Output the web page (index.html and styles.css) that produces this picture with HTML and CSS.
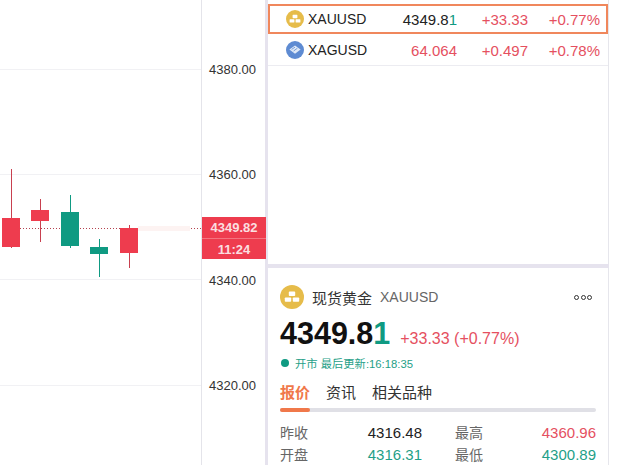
FILE: index.html
```html
<!DOCTYPE html>
<html lang="en">
<head>
    <meta charset="UTF-8" />
    <title>XAUUSD</title>
    <link rel="stylesheet" href="styles.css">
</head>
<body>
    <!-- Candle chart, cropped on the left -->
    <section class="chart">
        <svg class="candles" width="201" height="465" viewBox="0 0 201 465">
            <g stroke="#f1f1f4">
                <line x1="0" y1="69.5" x2="201" y2="69.5" />
                <line x1="0" y1="174.5" x2="201" y2="174.5" />
                <line x1="0" y1="279.5" x2="201" y2="279.5" />
                <line x1="0" y1="385.5" x2="201" y2="385.5" />
            </g>
            <line x1="20" y1="228.5" x2="201" y2="228.5" stroke="#b5424f" stroke-dasharray="1 2" />
            <g fill="#ee3c4e">
                <rect x="11" y="169" width="1" height="79" fill="#c8404f" />
                <rect x="2" y="218" width="18" height="29" />
                <rect x="40" y="199" width="1" height="43" fill="#c8404f" />
                <rect x="31" y="210" width="18" height="11" />
                <rect x="129" y="225" width="1" height="43" fill="#c8404f" />
                <rect x="120" y="228" width="18" height="25" />
            </g>
            <g fill="#0f9a82">
                <rect x="70" y="195" width="1" height="53" />
                <rect x="61" y="212" width="18" height="34" />
                <rect x="99" y="239" width="1" height="38" />
                <rect x="90" y="247" width="18" height="7" />
            </g>
            <rect x="138" y="226" width="52" height="5" fill="#fdf3f2" />
        </svg>
    </section>

    <!-- Price axis -->
    <section class="axis">
        <span class="axis-label">4380.00</span>
        <span class="axis-label">4360.00</span>
        <span class="axis-label">4340.00</span>
        <span class="axis-label">4320.00</span>
        <div class="price-tag">
            <span>4349.82</span>
            <span class="price-tag-time">11:24</span>
        </div>
    </section>

    <main class="side">
        <!-- Watch list -->
        <section class="watchlist">
            <div class="quote-row selected">
                <svg class="coin" width="18" height="18" viewBox="0 0 18 18">
                    <circle cx="9" cy="9" r="9" fill="#e6bc4a" />
                    <rect x="6.6" y="4.8" width="4.8" height="3.4" rx="0.6" fill="#fff" />
                    <rect x="3.6" y="9.2" width="4.8" height="3.4" rx="0.6" fill="#fff" />
                    <rect x="9.6" y="9.2" width="4.8" height="3.4" rx="0.6" fill="#fff" />
                </svg>
                <span class="symbol">XAUUSD</span>
                <span class="last">4349.8<span class="up-digit">1</span></span>
                <span class="change">+33.33</span>
                <span class="pct">+0.77%</span>
            </div>
            <div class="quote-row">
                <svg class="coin" width="18" height="18" viewBox="0 0 18 18">
                    <circle cx="9" cy="9" r="9" fill="#5e8bd2" />
                    <path d="M9 4.6 L14.6 8.4 L9 12.8 L3.4 8.4 Z" fill="#dfe9f7" />
                    <path d="M5.6 8.4 L9 6.2 M7.6 10 L11.4 7.2" stroke="#5e8bd2" stroke-width="0.8" />
                </svg>
                <span class="symbol">XAGUSD</span>
                <span class="last red">64.064</span>
                <span class="change">+0.497</span>
                <span class="pct">+0.78%</span>
            </div>
        </section>

        <!-- Detail for the selected symbol -->
        <section class="detail">
            <div class="detail-head">
                <svg class="coin-big" width="24" height="24" viewBox="0 0 24 24">
                    <circle cx="12" cy="12" r="12" fill="#e6bc4a" />
                    <rect x="8.8" y="6.6" width="6.4" height="4.4" rx="0.8" fill="#fff" />
                    <rect x="4.8" y="12.4" width="6.4" height="4.4" rx="0.8" fill="#fff" />
                    <rect x="12.8" y="12.4" width="6.4" height="4.4" rx="0.8" fill="#fff" />
                </svg>
                <span class="detail-name">现货黄金</span>
                <span class="detail-symbol">XAUUSD</span>
                <span class="more"><i></i><i></i><i></i></span>
            </div>
            <div class="detail-price">
                <span class="big-price">4349.8<span class="up-digit">1</span></span>
                <span class="big-change">+33.33 (+0.77%)</span>
            </div>
            <div class="status"><i class="dot"></i>开市 最后更新:16:18:35</div>
            <div class="tabs">
                <span class="tab active">报价</span>
                <span class="tab">资讯</span>
                <span class="tab">相关品种</span>
            </div>
            <div class="tab-track"><div class="tab-thumb"></div></div>
            <div class="stats">
                <div class="stat"><span class="stat-name">昨收</span><span>4316.48</span></div>
                <div class="stat"><span class="stat-name">最高</span><span class="red">4360.96</span></div>
                <div class="stat"><span class="stat-name">开盘</span><span class="green">4316.31</span></div>
                <div class="stat"><span class="stat-name">最低</span><span class="green">4300.89</span></div>
            </div>
        </section>
    </main>
</body>
</html>
```

FILE: styles.css
```css
* {
    box-sizing: border-box;
    margin: 0;
    padding: 0;
}

html, body {
    height: 465px;
    overflow: hidden;
}

body {
    width: 618px;
    display: flex;
    background: #fff;
    color: #222;
    font-family: "Liberation Sans", "Noto Sans CJK SC", sans-serif;
}

/* Chart */
.chart {
    width: 201px;
    flex: none;
}

.candles {
    display: block;
}

/* Price axis */
.axis {
    position: relative;
    width: 64px;
    flex: none;
    padding-top: 62px;
    display: flex;
    flex-direction: column;
    border-left: 1px solid #e4e4ea;
}

.axis-label {
    flex: none;
    height: 105.3px;
    padding-left: 7px;
    font-size: 13px;
    line-height: 15px;
    color: #333;
}

.price-tag {
    position: absolute;
    left: 0;
    top: 217px;
    width: 64px;
    height: 42px;
    display: flex;
    flex-direction: column;
    background: #ee3c4e;
    color: #fbdfe0;
    font-size: 13px;
    font-weight: bold;
    text-align: center;
}

.price-tag span {
    height: 21px;
    line-height: 21px;
}

.price-tag-time {
    border-top: 1px solid #f4737f;
}

/* Right column */
.side {
    width: 344px;
    flex: none;
    display: flex;
    flex-direction: column;
    gap: 4px;
    background: #e6e3ee;
    padding-left: 3px;
}

.watchlist {
    flex: none;
    height: 264px;
    background: #fff;
    border-right: 1px solid #e6e6ec;
    padding-top: 4px;
}

.quote-row {
    height: 31px;
    display: flex;
    align-items: center;
    padding-left: 18px;
    padding-right: 8px;
    font-size: 15px;
    border-bottom: 1px solid #ececf1;
}

.quote-row.selected {
    height: 30px;
    border: 2px solid #f0875c;
    padding-left: 16px;
    padding-right: 6px;
    margin-bottom: 1px;
}

.coin {
    flex: none;
    margin-right: 4px;
}

.symbol {
    width: 77px;
    font-size: 14px;
}

.last {
    width: 72px;
    text-align: right;
}

.change {
    width: 71px;
    text-align: right;
    color: #e5505f;
}

.pct {
    flex: 1;
    text-align: right;
    color: #e5505f;
}

.red {
    color: #e5505f;
}

.green {
    color: #1f9f88;
}

.up-digit {
    color: #0f9a82;
}

/* Detail panel */
.detail {
    flex: 1;
    background: #fff;
    border-right: 1px solid #e6e6ec;
    padding: 17px 12px 0;
}

.detail-head {
    display: flex;
    align-items: center;
    height: 24px;
}

.coin-big {
    flex: none;
    margin-right: 8px;
}

.detail-name {
    font-size: 15px;
    color: #333;
    margin-right: 8px;
}

.detail-symbol {
    font-size: 14px;
    color: #666;
}

.more {
    margin-left: auto;
    margin-right: 4px;
    display: flex;
    gap: 1.5px;
}

.more i {
    width: 5px;
    height: 5px;
    border: 1px solid #333;
    border-radius: 50%;
}

.detail-price {
    margin-top: 8px;
    display: flex;
    align-items: baseline;
    height: 33px;
}

.big-price {
    font-size: 30.5px;
    line-height: 33px;
    font-weight: bold;
    color: #111;
}

.big-change {
    margin-left: 10px;
    font-size: 16px;
    color: #e5505f;
}

.status {
    margin-top: 5px;
    display: flex;
    align-items: center;
    height: 16px;
    font-size: 11.3px;
    color: #1f9f88;
}

.dot {
    width: 8px;
    height: 8px;
    border-radius: 50%;
    background: #0f9a82;
    margin: 0 6px 0 1px;
}

.tabs {
    margin-top: 12px;
    display: flex;
    gap: 16px;
    font-size: 15px;
    line-height: 20px;
    color: #333;
}

.tab.active {
    color: #f0784a;
    font-weight: bold;
}

.tab-track {
    margin-top: 5px;
    height: 4px;
    border-radius: 2px;
    background: #e0e0e6;
}

.tab-thumb {
    width: 30px;
    height: 4px;
    border-radius: 2px;
    background: #f0784a;
}

.stats {
    margin-top: 9px;
    display: grid;
    grid-template-columns: 142px 141px;
    column-gap: 33px;
    grid-auto-rows: 22px;
    font-size: 15px;
}

.stat {
    display: flex;
    justify-content: space-between;
    align-items: center;
}

.stat-name {
    font-size: 14px;
    color: #666;
}
```
